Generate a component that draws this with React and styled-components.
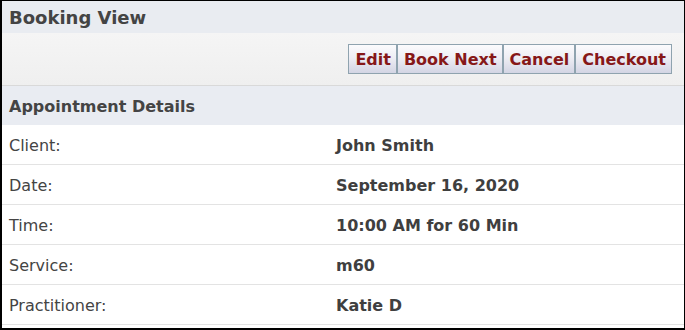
import React from 'react';
import styled, { createGlobalStyle } from 'styled-components';

const GlobalStyle = createGlobalStyle`
  html, body {
    margin: 0;
    padding: 0;
    background: #ffffff;
  }
  body {
    font-family: "DejaVu Sans", Verdana, sans-serif;
  }
`;

const Frame = styled.div`
  width: 685px;
  height: 330px;
  box-sizing: border-box;
  border-style: solid;
  border-color: #000;
  border-width: 1px 1px 2px 2px;
  background: #fff;
  display: flex;
  flex-direction: column;
  overflow: hidden;
`;

const TitleBar = styled.div`
  height: 32px;
  flex-shrink: 0;
  background: #e9ecf1;
  display: flex;
  align-items: center;
  padding-left: 7px;
  font-size: 18px;
  font-weight: bold;
  color: #444;
`;

const Toolbar = styled.div`
  height: 53px;
  flex-shrink: 0;
  box-sizing: border-box;
  padding: 11px 12px 0 0;
  background: linear-gradient(#f5f5f5, #efefef);
  border-bottom: 1px solid #d9d9d9;
  display: flex;
  justify-content: flex-end;
  align-items: flex-start;
`;

const Button = styled.button`
  height: 30px;
  box-sizing: border-box;
  margin: 0;
  padding: 0 5px 0 6px;
  border: 1px solid #8fa3af;
  background: linear-gradient(#fbfbfd 0%, #eeeef4 45%, #d3d5e4 100%);
  font-family: "DejaVu Sans", Verdana, sans-serif;
  font-size: 16px;
  font-weight: bold;
  color: #861818;
  cursor: pointer;
`;

const SectionHeader = styled.div`
  height: 39px;
  flex-shrink: 0;
  box-sizing: border-box;
  padding: 1px 0 0 7px;
  background: #e9ecf2;
  display: flex;
  align-items: center;
  font-size: 16px;
  font-weight: bold;
  color: #444;
`;

const Row = styled.div`
  height: 40px;
  flex-shrink: 0;
  box-sizing: border-box;
  border-bottom: 1px solid #e3e3e3;
  display: grid;
  grid-template-columns: 327px 1fr;
  align-items: center;
  padding: 1px 0 0 7px;
  font-size: 16px;
  color: #444;
`;

const Label = styled.span`
  font-weight: normal;
`;

const Value = styled.span`
  font-weight: bold;
  color: #3f3f3f;
`;

const details = [
  ['Client:', 'John Smith'],
  ['Date:', 'September 16, 2020'],
  ['Time:', '10:00 AM for 60 Min'],
  ['Service:', 'm60'],
  ['Practitioner:', 'Katie D'],
];

const App = () => {
  return (
    <>
      <GlobalStyle />
      <Frame>
        <TitleBar>Booking View</TitleBar>
        <Toolbar>
          <Button>Edit</Button>
          <Button>Book Next</Button>
          <Button>Cancel</Button>
          <Button>Checkout</Button>
        </Toolbar>
        <SectionHeader>Appointment Details</SectionHeader>
        {details.map(([label, value]) => (
          <Row key={label}>
            <Label>{label}</Label>
            <Value>{value}</Value>
          </Row>
        ))}
      </Frame>
    </>
  );
};

export default App;
